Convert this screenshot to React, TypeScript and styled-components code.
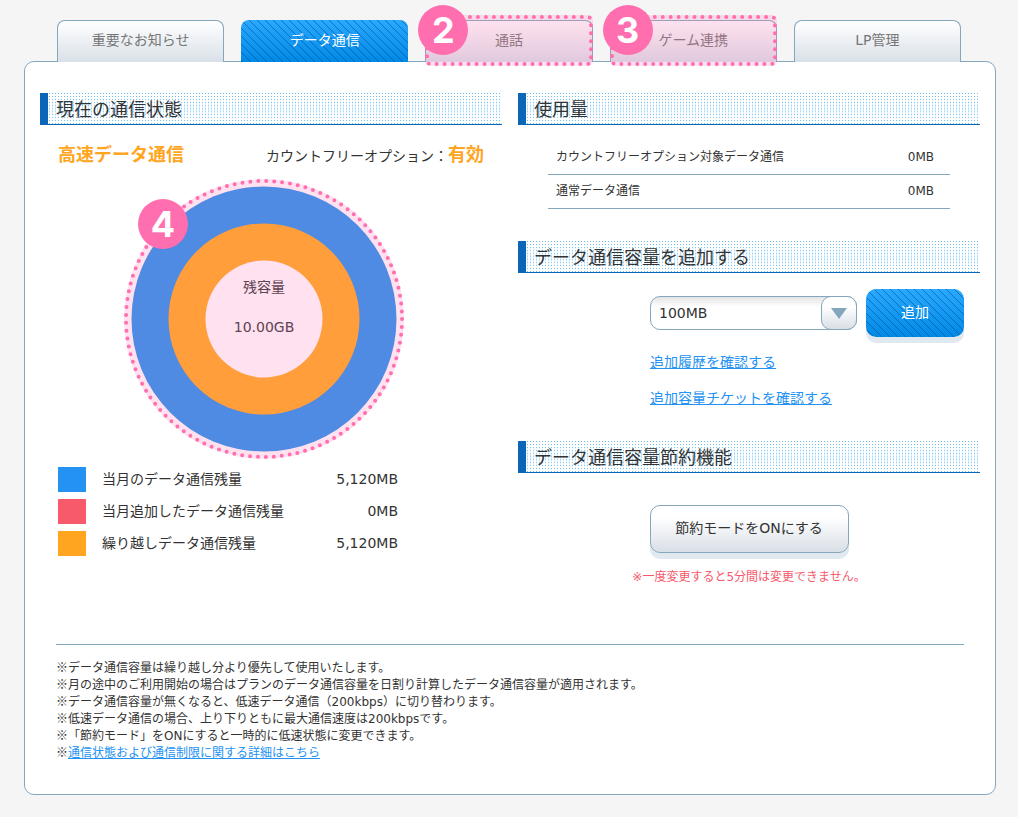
import React from "react";
import styled, { createGlobalStyle, css } from "styled-components";

const sans = `"DejaVu Sans", "Noto Sans CJK JP", sans-serif`;
const line = "#84a7bd";
const blueStripes = css`
  background:
    linear-gradient(45deg, transparent 45%, rgba(0, 80, 150, 0.6) 46% 54%, transparent 55%) 0 0 / 8px 8px,
    linear-gradient(#2aa9ff, #0089e6);
`;

const Global = createGlobalStyle`
  * { box-sizing: border-box; }
  body { margin: 0; background: #f5f5f5; color: #333; font: 14px/20px ${sans}; }
  button, select { font-family: inherit; font-size: 14px; }
  h2, p, ul, dl, dd { margin: 0; padding: 0; }
`;

const Page = styled.div`
  padding: 20px 22px 22px 24px;
`;

const Tabs = styled.nav`
  display: grid;
  grid-template-columns: repeat(5, 1fr);
  gap: 17px;
  padding: 0 35px 0 33px;
`;

const TabCell = styled.div`
  position: relative;
`;

const Tab = styled.button<{ $active?: boolean }>`
  display: block;
  width: 100%;
  height: 42px;
  padding: 0 0 5px;
  border: 1px solid ${line};
  border-bottom: 0;
  border-radius: 8px 8px 0 0;
  background: linear-gradient(#fff, #d9e0e8);
  color: #777;
  ${(p) =>
    p.$active &&
    css`
      position: relative;
      z-index: 1;
      padding-bottom: 4px;
      border: 0;
      color: #fff;
      ${blueStripes}
    `}
`;

const TabHighlight = styled.div`
  position: absolute;
  inset: -5px 0 -4px;
  z-index: 2;
  border: 4px dotted #ff6eae;
  border-radius: 5px;
  background: rgba(255, 110, 174, 0.2);
  pointer-events: none;
`;

const Badge = styled.span<{ $left: number; $top: number }>`
  position: absolute;
  left: ${(p) => p.$left}px;
  top: ${(p) => p.$top}px;
  z-index: 3;
  width: 50px;
  height: 50px;
  border-radius: 50%;
  background: #ff6eae;
  color: #fff;
  font: 700 36px/50px Inter, sans-serif;
  text-align: center;
`;

const Panel = styled.main`
  margin-top: -1px;
  padding: 31px 15px 32px;
  border: 1px solid ${line};
  border-radius: 10px;
  background: #fff;
`;

const Columns = styled.div`
  display: grid;
  grid-template-columns: 1fr 1fr;
  gap: 16px;
`;

const Heading = styled.h2`
  height: 32px;
  padding: 1px 0 0 8px;
  border-left: 8px solid #0b66b7;
  box-shadow: inset 0 -1px #0b66b7;
  background:
    linear-gradient(#0b66b7, #0b66b7) 0 100% / 100% 1px no-repeat,
    linear-gradient(90deg, #fff 1px, transparent 1px 2px, #fff 2px) 0 0 / 3px 3px,
    linear-gradient(transparent 15%, rgba(178, 224, 252, 0.8) 50%, transparent 85%),
    linear-gradient(transparent 1px, #fff 1px) 0 0 / 3px 3px,
    #6fc0f2;
  font-size: 18px;
  font-weight: 400;
  line-height: 32px;
`;

const Status = styled.div`
  display: flex;
  justify-content: space-between;
  align-items: baseline;
  padding: 18px 18px 0;
  line-height: 24px;
`;

const Strong = styled.strong`
  color: #ffa51f;
  font-size: 18px;
`;

const Chart = styled.div`
  position: relative;
  width: 280px;
  height: 280px;
  margin: 11px 0 0 84px;
  svg { display: block; }
`;

const ChartLabel = styled.div`
  position: absolute;
  inset: 98px 0 auto;
  color: #5c4353;
  text-align: center;
  p + p { margin-top: 20px; }
`;

const Legend = styled.dl`
  display: grid;
  grid-template-columns: 28px 200px 96px;
  column-gap: 8px;
  row-gap: 7px;
  padding: 8px 0 0 18px;
  line-height: 25px;
  dt { padding-left: 8px; }
  dd { text-align: right; }
`;

const Swatch = styled.span<{ $color: string }>`
  background: ${(p) => p.$color};
`;

const Usage = styled.table`
  width: calc(100% - 60px);
  margin: 16px 30px 32px;
  border-collapse: separate;
  border-spacing: 0;
  font-size: 12px;
  line-height: 17px;
  th, td { height: 34px; padding: 0 16px 0 8px; border-bottom: 1px solid ${line}; font-weight: 400; text-align: left; }
  td { text-align: right; }
`;

const AddRow = styled.form`
  display: flex;
  align-items: center;
  gap: 9px;
  padding: 16px 16px 0 132px;
`;

const SelectBox = styled.label`
  position: relative;
  flex: 1;
  height: 34px;
`;

const Select = styled.select`
  width: 100%;
  height: 34px;
  padding: 0 40px 0 8px;
  border: 1px solid ${line};
  border-radius: 10px;
  appearance: none;
  background: linear-gradient(#e4e4e4, #fff 10px);
  color: #333;
`;

const Arrow = styled.span`
  position: absolute;
  top: 0;
  right: 0;
  display: grid;
  place-items: center;
  width: 36px;
  height: 34px;
  border: 1px solid ${line};
  border-radius: 10px;
  background: linear-gradient(#fff 30%, #d9dfe6);
  pointer-events: none;
`;

const AddButton = styled.button`
  width: 98px;
  height: 48px;
  padding: 0 0 4px;
  border: 0;
  border-radius: 10px;
  box-shadow: 0 6px #e1e9f0;
  color: #fff;
  ${blueStripes}
`;

const Links = styled.ul`
  display: grid;
  gap: 16px;
  padding: 15px 0 33px 132px;
  list-style: none;
`;

const Link = styled.a`
  color: #2492f2;
`;

const Saving = styled.div`
  display: grid;
  justify-items: center;
  gap: 14px;
  padding-top: 32px;
`;

const SaveButton = styled.button`
  width: 199px;
  height: 48px;
  padding: 0 0 4px;
  border: 1px solid ${line};
  border-radius: 10px;
  box-shadow: 0 6px #e1e9f0;
  background: linear-gradient(#fff 25%, #d9dfe6);
  color: #333;
`;

const Warning = styled.p`
  color: #f75a6b;
  font-size: 12px;
`;

const Mark = styled.span`
  font-family: "Noto Sans CJK JP", sans-serif;
  line-height: 1;
`;

const Notes = styled.ul`
  margin: 57px 16px 0;
  padding: 15px 0 0;
  border-top: 1px solid ${line};
  list-style: none;
  font-size: 12px;
  line-height: 17px;
`;

const tabs = [
  { label: "重要なお知らせ" },
  { label: "データ通信", active: true },
  { label: "通話", badge: "2" },
  { label: "ゲーム連携", badge: "3" },
  { label: "LP管理" },
];

const legend = [
  ["#2492f2", "当月のデータ通信残量", "5,120MB"],
  ["#f75a6b", "当月追加したデータ通信残量", "0MB"],
  ["#ffa51f", "繰り越しデータ通信残量", "5,120MB"],
];

const notes = [
  "データ通信容量は繰り越し分より優先して使用いたします。",
  "月の途中のご利用開始の場合はプランのデータ通信容量を日割り計算したデータ通信容量が適用されます。",
  "データ通信容量が無くなると、低速データ通信（200kbps）に切り替わります。",
  "低速データ通信の場合、上り下りともに最大通信速度は200kbpsです。",
  "「節約モード」をONにすると一時的に低速状態に変更できます。",
];

export default function App() {
  return (
    <>
      <Global />
      <Page>
        <Tabs>
          {tabs.map((t) => (
            <TabCell key={t.label}>
              <Tab type="button" $active={t.active}>{t.label}</Tab>
              {t.badge && <TabHighlight />}
              {t.badge && <Badge $left={-7} $top={-15}>{t.badge}</Badge>}
            </TabCell>
          ))}
        </Tabs>
        <Panel>
          <Columns>
            <section>
              <Heading>現在の通信状態</Heading>
              <Status>
                <Strong>高速データ通信</Strong>
                <span>カウントフリーオプション：<Strong>有効</Strong></span>
              </Status>
              <Chart>
                <svg width="280" height="280" viewBox="0 0 280 280" aria-hidden="true">
                  <circle cx="140" cy="140" r="140" fill="#ffe1ef" />
                  <circle cx="140" cy="140" r="132.5" fill="#4f8be2" />
                  <circle cx="140" cy="140" r="95.5" fill="#ff9e3b" />
                  <circle cx="140" cy="140" r="58.5" fill="#ffe1ef" />
                  <circle
                    cx="140" cy="140" r="138" fill="none" stroke="#ff6eae" strokeWidth="4"
                    strokeLinecap="round" strokeDasharray="0 7.955"
                  />
                </svg>
                <ChartLabel>
                  <p>残容量</p>
                  <p>10.00GB</p>
                </ChartLabel>
                <Badge $left={14} $top={20}>4</Badge>
              </Chart>
              <Legend>
                {legend.map(([color, label, value]) => (
                  <React.Fragment key={label}>
                    <Swatch $color={color} />
                    <dt>{label}</dt>
                    <dd>{value}</dd>
                  </React.Fragment>
                ))}
              </Legend>
            </section>
            <section>
              <Heading>使用量</Heading>
              <Usage>
                <tbody>
                  <tr><th scope="row">カウントフリーオプション対象データ通信</th><td>0MB</td></tr>
                  <tr><th scope="row">通常データ通信</th><td>0MB</td></tr>
                </tbody>
              </Usage>
              <Heading>データ通信容量を追加する</Heading>
              <AddRow>
                <SelectBox>
                  <Select aria-label="追加する容量" defaultValue="100MB">
                    <option>100MB</option>
                  </Select>
                  <Arrow>
                    <svg width="16" height="11" viewBox="0 0 16 11" aria-hidden="true">
                      <path d="M0 0h16L8 11z" fill="#84a7bd" />
                    </svg>
                  </Arrow>
                </SelectBox>
                <AddButton type="button">追加</AddButton>
              </AddRow>
              <Links>
                <li><Link href="#history">追加履歴を確認する</Link></li>
                <li><Link href="#tickets">追加容量チケットを確認する</Link></li>
              </Links>
              <Heading>データ通信容量節約機能</Heading>
              <Saving>
                <SaveButton type="button">節約モードをONにする</SaveButton>
                <Warning>※一度変更すると5分間は変更できません。</Warning>
              </Saving>
            </section>
          </Columns>
          <Notes>
            {notes.map((n) => <li key={n}><Mark>※</Mark>{n}</li>)}
            <li><Mark>※</Mark><Link href="#details">通信状態および通信制限に関する詳細はこちら</Link></li>
          </Notes>
        </Panel>
      </Page>
    </>
  );
}
